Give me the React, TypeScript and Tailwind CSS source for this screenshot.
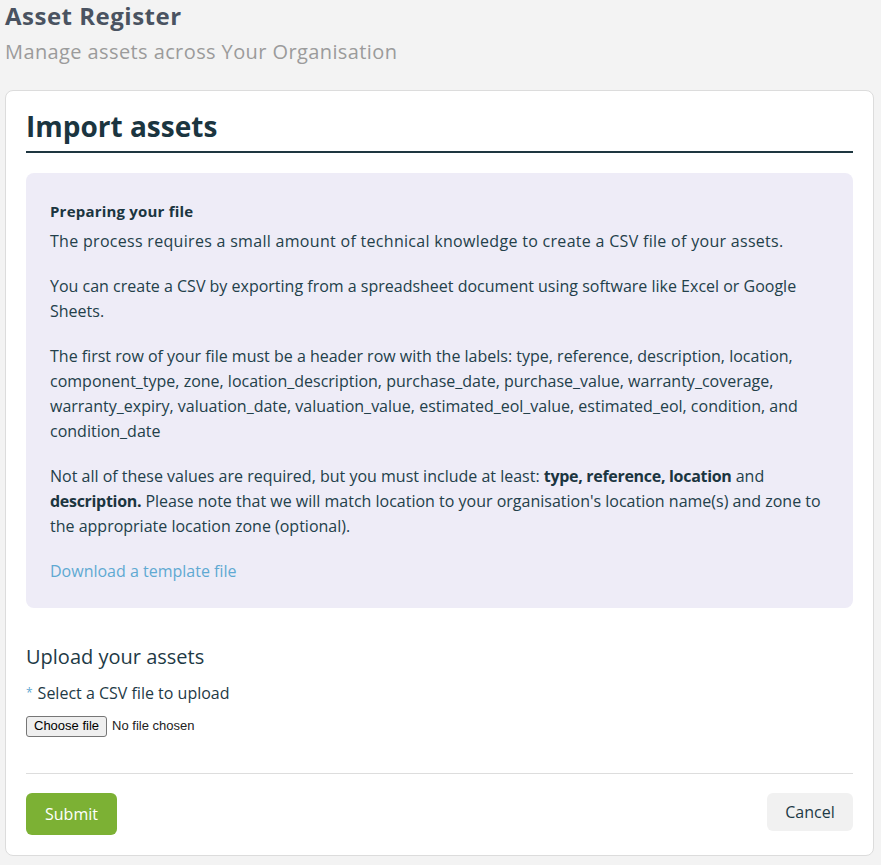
import React from "react";

const font = { fontFamily: "'Open Sans', 'Noto Sans', sans-serif" };
const sys = { fontFamily: "'Liberation Sans', Arial, sans-serif" };

export default function App() {
  return (
    <div className="min-h-[865px] bg-[#f3f3f3] pl-[5px] pr-[7px]" style={font}>
      <h1 className="text-[24px] leading-[32px] font-bold tracking-[0.5px] text-[#4a5361]">Asset Register</h1>
      <p className="mt-[3px] text-[20px] leading-[34px] tracking-[0.4px] text-[#9b9b9b]">
        Manage assets across Your Organisation
      </p>
      <div className="mt-[21px] rounded-[8px] border border-[#dcdcdc] bg-white px-[20px] pt-[17px] pb-[20px]">
        <h2 className="border-b-2 border-[#1e3640] pb-[7px] text-[28px] leading-[36px] font-bold text-[#1b3540]">
          Import assets
        </h2>
        <div className="mt-[20px] rounded-[8px] bg-[#eeecf7] px-[24px] pt-[26px] pb-[24px] text-[16px] leading-[25px] text-[#23404a]">
          <h3 className="mb-[5px] text-[15px] font-bold leading-[25px] tracking-[0.2px] text-[#1b3540]">
            Preparing your file
          </h3>
          <p className="mb-[20px] tracking-[0.3px]">
            The process requires a small amount of technical knowledge to create a CSV file of your assets.
          </p>
          <p className="mb-[20px]">
            You can create a CSV by exporting from a spreadsheet document using software like Excel or Google
            <br />
            Sheets.
          </p>
          <p className="mb-[20px]">
            The first row of your file must be a header row with the labels: type, reference, description, location,
            <br />
            component_type, zone, location_description, purchase_date, purchase_value, warranty_coverage,
            <br />
            warranty_expiry, valuation_date, valuation_value, estimated_eol_value, estimated_eol, condition, and
            <br />
            condition_date
          </p>
          <p className="mb-[20px] whitespace-nowrap">
            Not all of these values are required, but you must include at least:{" "}
            <strong className="font-bold tracking-[-0.3px] text-[#1b3540]">type, reference, location</strong> and
            <br />
            <strong className="font-bold tracking-[-0.3px] text-[#1b3540]">description.</strong> Please note that we
            will match location to your organisation's location name(s) and zone to
            <br />
            the appropriate location zone (optional).
          </p>
          <a href="#" className="text-[#5fa9d2]">
            Download a template file
          </a>
        </div>
        <div className="mt-[35px] text-[20px] leading-[28px] text-[#1e3a46]">Upload your assets</div>
        <div className="mt-[10px] flex items-center text-[16px] leading-[24px] text-[#1e3a46]">
          <span className="mr-[5px] text-[12px] text-[#5fa9d2]">*</span>
          Select a CSV file to upload
        </div>
        <label className="mt-[11px] flex h-[20px] cursor-pointer items-center text-[13px]" style={sys}>
          <input type="file" className="hidden" />
          <span className="flex h-[21px] items-center rounded-[3px] border border-[#767676] bg-[#efefef] px-[7px] text-black">
            Choose file
          </span>
          <span className="ml-[5px] text-[#222]">No file chosen</span>
        </label>
        <div className="mt-[37px] border-t border-[#dddddd]" />
        <div className="mt-[19px] flex items-start justify-between">
          <button className="h-[42px] w-[91px] rounded-[6px] bg-[#7cb134] text-[16px] text-white">Submit</button>
          <button className="h-[38px] w-[86px] rounded-[6px] bg-[#f1f1f1] text-[16px] text-[#1e3a46]">Cancel</button>
        </div>
      </div>
    </div>
  );
}
